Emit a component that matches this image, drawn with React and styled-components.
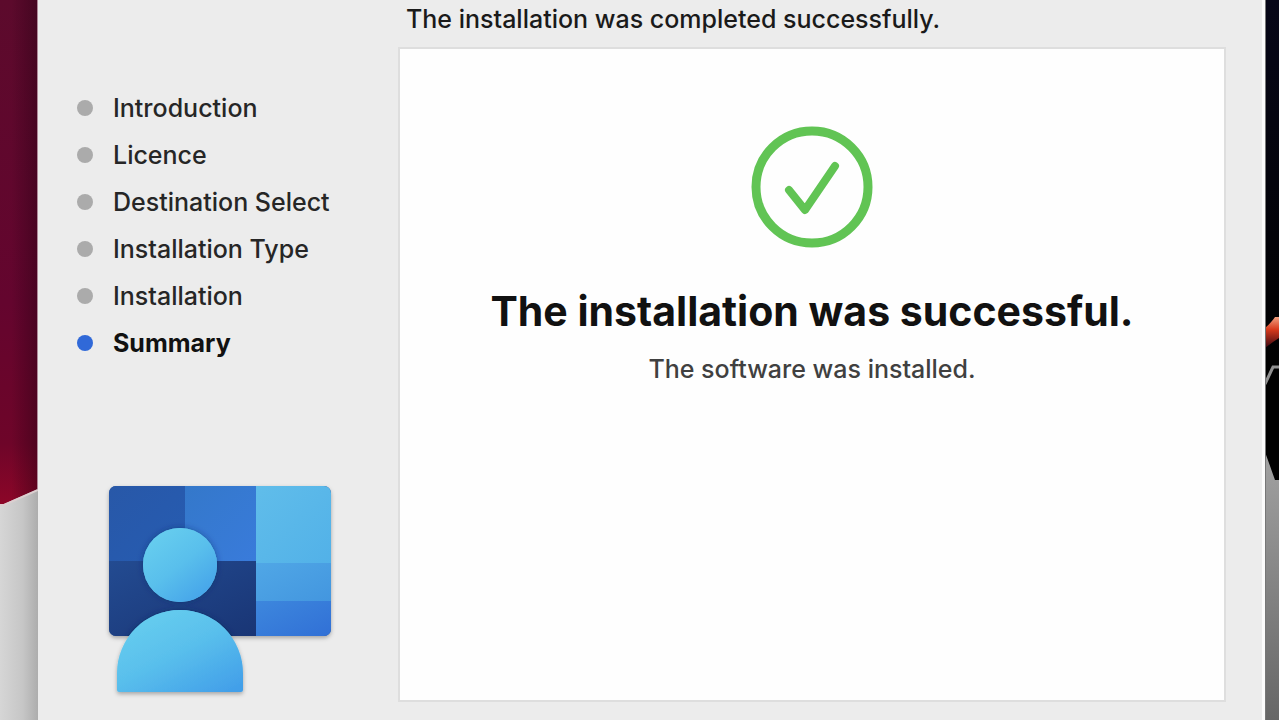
import React from "react"
import styled, { createGlobalStyle, css } from "styled-components"

const GlobalStyle = createGlobalStyle`
  * {
    box-sizing: border-box;
  }
  body {
    margin: 0;
    background-color: #ececec;
    color: #262626;
    font-family: Inter, "Liberation Sans", sans-serif;
    font-size: 25px;
    font-weight: 500;
    line-height: 32px;
  }
`

const Desktop = styled.div`
  display: flex;
  min-height: 100vh;
`
const Wallpaper = styled.svg`
  display: block;
  flex: none;
  width: ${props => props.$width};
  height: auto;
  align-self: stretch;
`
const InstallerWindow = styled.div`
  display: flex;
  flex: 1;
  min-width: 0;
  padding: 0 36px 18px 0;
  border-right: 3px solid #fbfbfb;
  background-color: #ececec;
`
const Sidebar = styled.aside`
  display: flex;
  flex-direction: column;
  justify-content: space-between;
  flex: none;
  width: 360px;
  padding: 84px 0 2px 39px;
`
const Steps = styled.ol`
  margin: 0;
  padding: 0;
  list-style: none;
`
const Step = styled.li`
  display: flex;
  align-items: center;
  gap: 20px;
  height: 47px;
  white-space: nowrap;
  &::before {
    content: "";
    width: 16px;
    height: 16px;
    border-radius: 50%;
    background-color: #ababab;
  }
  ${props =>
    props.$current &&
    css`
      color: #111;
      font-weight: 700;
      &::before {
        background-color: #3069d8;
      }
    `}
`
const AppIcon = styled.svg`
  display: block;
  width: 240px;
  height: 220px;
  margin-left: 23px;
`
const Main = styled.main`
  display: flex;
  flex-direction: column;
  flex: 1;
  min-width: 0;
`
const Status = styled.h1`
  margin: 0;
  padding: 3px 8px 12px;
  color: #1a1a1a;
  font-size: 25px;
  font-weight: 500;
`
const Panel = styled.section`
  display: flex;
  flex-direction: column;
  align-items: center;
  flex: 1;
  padding: 76px 24px 24px;
  border: 2px solid #dedede;
  background-color: #fefefe;
  text-align: center;
`
const SuccessMark = styled.svg`
  width: 124px;
  height: 124px;
`
const Headline = styled.h2`
  margin: 36px 0 0;
  color: #111;
  font-size: 41px;
  font-weight: 700;
  line-height: 52px;
`
const Note = styled.p`
  margin: 16px 0 0;
  color: #404040;
`

const steps = [
  "Introduction",
  "Licence",
  "Destination Select",
  "Installation Type",
  "Installation",
  "Summary",
]

const WallpaperLeft = () => (
  <Wallpaper
    $width="38px"
    viewBox="0 0 38 720"
    preserveAspectRatio="none"
    aria-hidden="true"
  >
    <defs>
      <linearGradient id="wine" x1="0" y1="0" x2="0" y2="1">
        <stop offset="0" stopColor="#5c0a2c" />
        <stop offset="0.6" stopColor="#64052e" />
        <stop offset="0.88" stopColor="#6e0529" />
        <stop offset="1" stopColor="#8c0628" />
      </linearGradient>
      <linearGradient id="silver" x1="0" y1="0" x2="1" y2="0">
        <stop offset="0" stopColor="#d6d6d6" />
        <stop offset="0.6" stopColor="#c6c6c6" />
        <stop offset="1" stopColor="#adadad" />
      </linearGradient>
      <linearGradient id="shade" x1="0" y1="0" x2="1" y2="0">
        <stop offset="0.3" stopColor="#200010" stopOpacity="0" />
        <stop offset="1" stopColor="#200010" stopOpacity="0.4" />
      </linearGradient>
    </defs>
    <rect width="38" height="720" fill="url(#silver)" />
    <path d="M0 0H38V489L4 504H0Z" fill="url(#wine)" />
    <path d="M0 0H38V489L4 504H0Z" fill="url(#shade)" />
    <path d="M0 505H4L38 490" fill="none" stroke="#dccfd0" strokeWidth="2" />
    <rect x="37" width="1" height="489" fill="#b08a9a" />
  </Wallpaper>
)

const WallpaperRight = () => (
  <Wallpaper
    $width="14px"
    viewBox="0 0 14 720"
    preserveAspectRatio="none"
    aria-hidden="true"
  >
    <defs>
      <linearGradient id="night" x1="0" y1="0" x2="0" y2="1">
        <stop offset="0" stopColor="#070718" />
        <stop offset="0.5" stopColor="#010101" />
      </linearGradient>
      <linearGradient id="ember" x1="0" y1="0" x2="0" y2="1">
        <stop offset="0" stopColor="#f0a080" />
        <stop offset="0.4" stopColor="#d83a1c" />
        <stop offset="1" stopColor="#3a0712" />
      </linearGradient>
      <linearGradient id="steel" x1="0" y1="0" x2="0" y2="1">
        <stop offset="0" stopColor="#a2a2a2" />
        <stop offset="1" stopColor="#666" />
      </linearGradient>
    </defs>
    <rect width="14" height="720" fill="url(#night)" />
    <path d="M0 328Q6 323 10 317H14V338L8 342L0 348Z" fill="url(#ember)" />
    <path d="M0 384L8 367H14" fill="none" stroke="#909090" strokeWidth="3" />
    <path d="M0 452L10 480H14V720H0Z" fill="url(#steel)" />
    <rect width="1" height="720" fill="#777" />
  </Wallpaper>
)

const DesktopAppIcon = () => (
  <AppIcon viewBox="100 480 240 220" role="img" aria-label="Remote desktop">
    <defs>
      <clipPath id="screen">
        <rect x="109" y="486" width="222" height="150" rx="7" />
      </clipPath>
      <linearGradient id="tileA" x1="0" y1="0" x2="1" y2="1">
        <stop offset="0" stopColor="#2858a8" />
        <stop offset="1" stopColor="#265cb2" />
      </linearGradient>
      <linearGradient id="tileB" x1="0" y1="0" x2="1" y2="1">
        <stop offset="0" stopColor="#3478ca" />
        <stop offset="1" stopColor="#397bdb" />
      </linearGradient>
      <linearGradient id="tileC" x1="0" y1="0" x2="1" y2="1">
        <stop offset="0" stopColor="#60bdea" />
        <stop offset="1" stopColor="#52b1e8" />
      </linearGradient>
      <linearGradient id="tileD" x1="0" y1="0" x2="1" y2="1">
        <stop offset="0" stopColor="#234b91" />
        <stop offset="1" stopColor="#193575" />
      </linearGradient>
      <linearGradient id="tileE" x1="0" y1="0" x2="1" y2="1">
        <stop offset="0" stopColor="#50a7e6" />
        <stop offset="1" stopColor="#4396df" />
      </linearGradient>
      <linearGradient id="tileF" x1="0" y1="0" x2="1" y2="1">
        <stop offset="0" stopColor="#3d87dd" />
        <stop offset="1" stopColor="#3170d6" />
      </linearGradient>
      <linearGradient id="person" x1="0.1" y1="0" x2="0.9" y2="1">
        <stop offset="0" stopColor="#69d0ef" />
        <stop offset="0.5" stopColor="#59bfec" />
        <stop offset="1" stopColor="#429fe9" />
      </linearGradient>
      <filter id="drop" x="-10%" y="-10%" width="120%" height="125%">
        <feDropShadow dx="0" dy="2" stdDeviation="2" floodOpacity="0.3" />
      </filter>
      <filter id="halo" x="-20%" y="-20%" width="140%" height="140%">
        <feDropShadow
          dx="0"
          dy="0"
          stdDeviation="3"
          floodColor="#0b2864"
          floodOpacity="0.5"
        />
      </filter>
    </defs>
    <rect
      x="109"
      y="486"
      width="222"
      height="150"
      rx="7"
      fill="#234b91"
      filter="url(#drop)"
    />
    <g clipPath="url(#screen)">
      <rect x="109" y="486" width="76" height="75" fill="url(#tileA)" />
      <rect x="185" y="486" width="71" height="75" fill="url(#tileB)" />
      <rect x="109" y="561" width="147" height="75" fill="url(#tileD)" />
      <rect x="256" y="486" width="75" height="77" fill="url(#tileC)" />
      <rect x="256" y="563" width="75" height="38" fill="url(#tileE)" />
      <rect x="256" y="601" width="75" height="35" fill="url(#tileF)" />
      <g filter="url(#halo)">
        <circle cx="180" cy="565" r="37" fill="#5bc2ec" />
        <path d="M117 692V673A63 63 0 0 1 243 673V692Z" fill="#5bc2ec" />
      </g>
    </g>
    <circle cx="180" cy="565" r="37" fill="url(#person)" />
    <path
      d="M117 690V673A63 63 0 0 1 243 673V690Q243 692 241 692H119Q117 692 117 690Z"
      fill="url(#person)"
      filter="url(#drop)"
    />
  </AppIcon>
)

const App = () => (
  <>
    <GlobalStyle />
    <Desktop>
      <WallpaperLeft />
      <InstallerWindow>
        <Sidebar>
          <Steps>
            {steps.map(step => (
              <Step
                key={step}
                $current={step === "Summary"}
                aria-current={step === "Summary" ? "step" : undefined}
              >
                {step}
              </Step>
            ))}
          </Steps>
          <DesktopAppIcon />
        </Sidebar>
        <Main>
          <Status>The installation was completed successfully.</Status>
          <Panel>
            <SuccessMark viewBox="0 0 124 124" aria-hidden="true">
              <g
                fill="none"
                stroke="#61c454"
                strokeLinecap="round"
                strokeLinejoin="round"
              >
                <circle cx="62" cy="62" r="56" strokeWidth="9" />
                <path d="M39 65L55 85L85 41" strokeWidth="8" />
              </g>
            </SuccessMark>
            <Headline>The installation was successful.</Headline>
            <Note>The software was installed.</Note>
          </Panel>
        </Main>
      </InstallerWindow>
      <WallpaperRight />
    </Desktop>
  </>
)

export default App
